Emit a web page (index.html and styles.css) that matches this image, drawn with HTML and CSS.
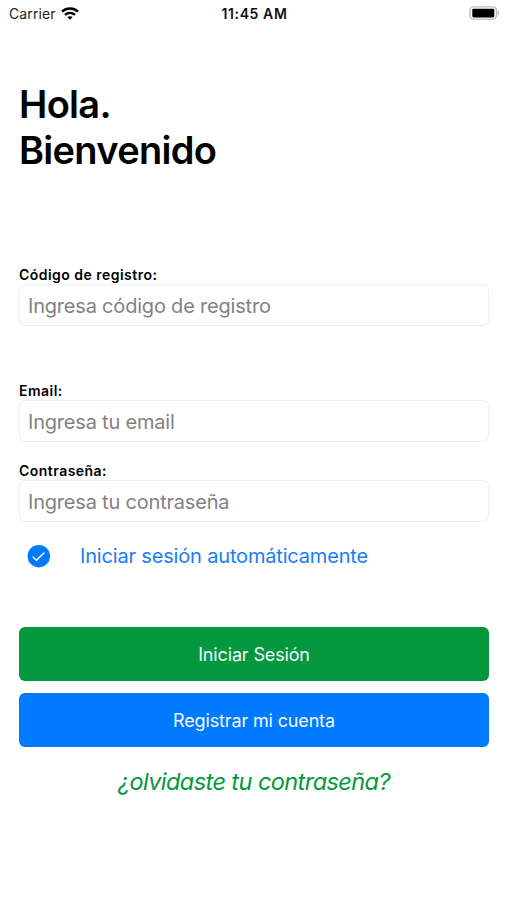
FILE: index.html
```html
<!DOCTYPE html>
<html lang="es">
<head>
<meta charset="utf-8">
<title>Iniciar Sesión</title>
<link rel="stylesheet" href="styles.css">
</head>
<body>
<header class="status">
  <div class="carrier"><span class="t carrier-name">Carrier</span>
    <svg class="wifi" viewBox="0 0 18 13" width="18" height="13" fill="none" stroke="#000" stroke-width="2.5"><path d="M1 4.6C5.5.4 12.5.4 17 4.6M4 7.9c2.9-2.6 7.1-2.6 10 0"/><path d="M6.4 10.1c1.5-1.3 3.7-1.3 5.2 0L9 12.8z" fill="#000" stroke="none"/></svg>
  </div>
  <div class="t time">11:45 AM</div>
  <svg class="battery" viewBox="0 0 31 14" width="31" height="14"><rect x="1" y=".9" width="26.5" height="12.2" rx="3.6" fill="none" stroke="#bdbdbd" stroke-width="1.4"/><rect x="3.3" y="2.7" width="22" height="8.8" rx="1.4" fill="#000"/><path d="M28.8 4.7c2 .8 2 3.8 0 4.6z" fill="#bdbdbd"/></svg>
</header>
<main>
  <h1><span class="t">Hola.</span><br><span class="t">Bienvenido</span></h1>
  <form>
    <div class="field code"><label><span class="t">Código de registro:</span></label><div class="input"><span class="t">Ingresa código de registro</span></div></div>
    <div class="field email"><label><span class="t">Email:</span></label><div class="input"><span class="t">Ingresa tu email</span></div></div>
    <div class="field"><label><span class="t">Contraseña:</span></label><div class="input"><span class="t">Ingresa tu contraseña</span></div></div>
    <div class="auto"><svg viewBox="0 0 24 24" width="24" height="24"><circle cx="11.8" cy="12.2" r="11.2" fill="#007aff"/><path d="M5.7 12.8l3.7 3.4 8-7.8" fill="none" stroke="#fff" stroke-width="1.4"/></svg><span class="t">Iniciar sesión automáticamente</span></div>
    <div class="btn green"><span class="t">Iniciar Sesión</span></div>
    <div class="btn blue"><span class="t">Registrar mi cuenta</span></div>
    <div class="forgot"><span class="t">¿olvidaste tu contraseña?</span></div>
  </form>
</main>
</body>
</html>
```
FILE: styles.css
```css
* { box-sizing: border-box; }
body { margin: 0; background: #fff; color: #000; font-family: Inter, "Liberation Sans", sans-serif; }
.t { display: inline-block; white-space: nowrap; }
.status { height: 26px; display: grid; grid-template-columns: 1fr auto 1fr; align-items: center; padding: 0 7px 0 9px; font-size: 14px; }
.carrier { display: flex; align-items: center; gap: 5.5px; color: #222; letter-spacing: .1px; }
.time { font-weight: 600; letter-spacing: .6px; color: #111; }
.battery { justify-self: end; }
main { padding: 0 18px 0 19px; }
h1 { margin: 55px 0 0; font-size: 38px; line-height: 46px; font-weight: 600; letter-spacing: -.7px; }
.code { margin-top: 92px; }
label { display: block; height: 19px; line-height: 19px; font-size: 14px; font-weight: 600; letter-spacing: .47px; }
.input { height: 42px; border: 1px solid #f0f0f0; border-radius: 6px; padding: 0 8px; line-height: 42px; font-size: 20px; letter-spacing: -.2px; color: #828282; }
.email { margin: 55px 0 19px; }
.auto { display: flex; align-items: center; height: 24px; margin: 22px 0 0 8px; gap: 29px; color: #1580f5; font-size: 20px; letter-spacing: -.17px; }
.btn { height: 54px; border-radius: 6px; color: #f2f8ff; display: flex; align-items: center; justify-content: center; font-size: 18px; letter-spacing: -.15px; }
.green { background: #03973e; margin-top: 59px; }
.blue { background: #007aff; margin-top: 12px; }
.forgot { margin-top: 20px; text-align: center; font-size: 23.5px; line-height: 30px; letter-spacing: -.57px; font-style: italic; color: #03973e; }
```
